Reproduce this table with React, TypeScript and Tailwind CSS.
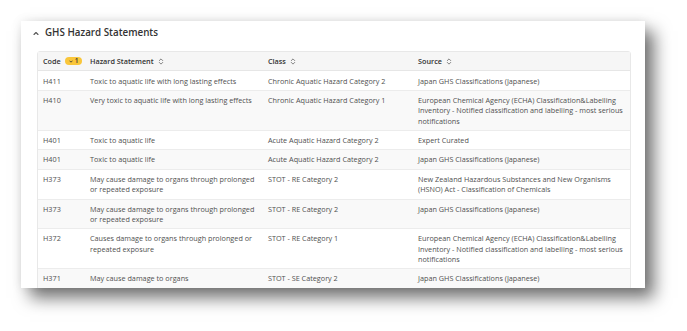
import React from "react";

const rows: [string, string, string, string][] = [
  ["H411", "Toxic to aquatic life with long lasting effects", "Chronic Aquatic Hazard Category 2", "Japan GHS Classifications (Japanese)"],
  ["H410", "Very toxic to aquatic life with long lasting effects", "Chronic Aquatic Hazard Category 1", "European Chemical Agency (ECHA) Classification&Labelling Inventory - Notified classification and labelling - most serious notifications"],
  ["H401", "Toxic to aquatic life", "Acute Aquatic Hazard Category 2", "Expert Curated"],
  ["H401", "Toxic to aquatic life", "Acute Aquatic Hazard Category 2", "Japan GHS Classifications (Japanese)"],
  ["H373", "May cause damage to organs through prolonged or repeated exposure", "STOT - RE Category 2", "New Zealand Hazardous Substances and New Organisms (HSNO) Act - Classification of Chemicals"],
  ["H373", "May cause damage to organs through prolonged or repeated exposure", "STOT - RE Category 2", "Japan GHS Classifications (Japanese)"],
  ["H372", "Causes damage to organs through prolonged or repeated exposure", "STOT - RE Category 1", "European Chemical Agency (ECHA) Classification&Labelling Inventory - Notified classification and labelling - most serious notifications"],
  ["H371", "May cause damage to organs", "STOT - SE Category 2", "Japan GHS Classifications (Japanese)"],
];

function SortIcon() {
  return (
    <svg width="6" height="7" viewBox="0 0 6 8" className="ml-[4px] inline-block" fill="none" stroke="#666" strokeWidth="0.9" strokeLinecap="round" strokeLinejoin="round">
      <path d="M1 3 L3 1 L5 3" />
      <path d="M1 5 L3 7 L5 5" />
    </svg>
  );
}

const grid = "grid grid-cols-[47px_178px_150px_219px]";

export default function App() {
  return (
    <div className="w-[687px] h-[331px] bg-white pl-[21px] pt-[21px]" style={{ fontFamily: '"Open Sans", sans-serif' }}>
      <div className="w-[624px] h-[267px] bg-white overflow-hidden shadow-[9px_10px_16px_rgba(0,0,0,0.55),0_0_10px_rgba(0,0,0,0.08)]">
        <div className="flex items-center h-[24px] pl-[12px] pt-[1px]">
          <svg width="6" height="5" viewBox="0 0 6 4" fill="none" stroke="#555" strokeWidth="1.1" strokeLinecap="round" strokeLinejoin="round">
            <path d="M1 3 L3 1 L5 3" />
          </svg>
          <span className="ml-[6px] text-[9.8px] font-semibold text-[#333]">GHS Hazard Statements</span>
        </div>
        <div className="ml-[16px] mt-[6px] w-[594px] border border-[#e8e8e8] rounded-[3px] text-[7.25px] leading-[10.2px] text-[#505050]">
          <div className={`${grid} bg-[#f6f6f6] border-b border-[#e6e6e6] font-semibold text-[#333]`}>
            <div className="px-[5px] py-[4.15px] flex items-center">
              Code
              <span className="ml-[4px] inline-flex items-center h-[8px] px-[4px] rounded-full bg-[#f9c63a] text-[6.5px] leading-[8px] text-[#333]">
                <svg width="4" height="3" viewBox="0 0 4 3" fill="none" stroke="#333" strokeWidth="0.8"><path d="M0.5 0.7 L2 2.2 L3.5 0.7" /></svg>
                <span className="ml-[2px]">1</span>
              </span>
            </div>
            <div className="px-[5px] py-[4.15px] flex items-center">Hazard Statement<SortIcon /></div>
            <div className="px-[5px] py-[4.15px] flex items-center">Class<SortIcon /></div>
            <div className="px-[5px] py-[4.15px] flex items-center">Source<SortIcon /></div>
          </div>
          {rows.map((r, i) => (
            <div key={i} className={`${grid} border-b border-[#ececec] ${i % 2 === 1 ? "bg-[#f9f9f9]" : "bg-white"}`}>
              {r.map((c, j) => (
                <div key={j} className={`py-[4.15px] ${j === 3 ? "pl-[5px] pr-[2px]" : "px-[5px]"}`}>{c}</div>
              ))}
            </div>
          ))}
        </div>
      </div>
    </div>
  );
}
